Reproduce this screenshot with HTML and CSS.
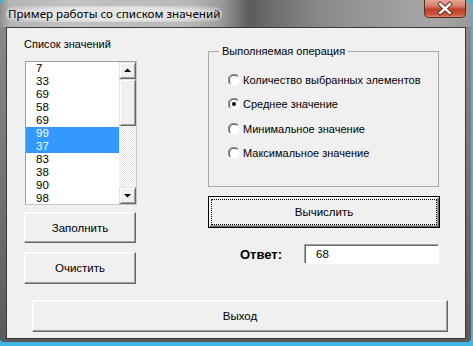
FILE: index.html
```html
<!DOCTYPE html>
<html lang="ru">
<head>
<meta charset="utf-8">
<title>Пример работы со списком значений</title>
<link rel="stylesheet" href="styles.css">
</head>
<body>
<div class="window">
  <div class="titlebar">
    <span class="title">Пример работы со списком значений</span>
    <div class="close">
      <svg width="42" height="18" viewBox="0 0 42 18">
        <path d="M16 4 L26 13 M26 4 L16 13" stroke="#5a2418" stroke-width="4.4" stroke-linecap="square"/>
        <path d="M16 4 L26 13 M26 4 L16 13" stroke="#ffffff" stroke-width="2.6" stroke-linecap="square"/>
      </svg>
    </div>
  </div>
  <div class="client">
    <div class="top">
      <div class="left">
        <div class="label">Список значений</div>
        <div class="listbox">
          <ul class="items">
            <li>7</li>
            <li>33</li>
            <li>69</li>
            <li>58</li>
            <li>69</li>
            <li class="sel">99</li>
            <li class="sel">37</li>
            <li>83</li>
            <li>38</li>
            <li>90</li>
            <li>98</li>
          </ul>
          <div class="scrollbar">
            <div class="sb-btn">
              <svg width="15" height="15" viewBox="0 0 15 15"><polygon points="4,9 11,9 7.5,5.5" fill="#000"/></svg>
            </div>
            <div class="sb-thumb"></div>
            <div class="sb-track"></div>
            <div class="sb-btn">
              <svg width="15" height="15" viewBox="0 0 15 15"><polygon points="4,6 11,6 7.5,9.5" fill="#000"/></svg>
            </div>
          </div>
        </div>
        <button class="btn btn-fill">Заполнить</button>
        <button class="btn btn-clear">Очистить</button>
      </div>
      <div class="right">
        <fieldset class="group">
          <legend>Выполняемая операция</legend>
          <div class="radio">
            <svg class="radio-icon" width="12" height="12" viewBox="0 0 12 12">
              <circle cx="6" cy="6" r="5.5" fill="#ffffff"/>
              <path d="M1.8 10.2 A5.5 5.5 0 0 1 10.2 1.8" fill="none" stroke="#8a8a8a" stroke-width="1"/>
              <path d="M2.6 9.4 A4.6 4.6 0 0 1 9.4 2.6" fill="none" stroke="#404040" stroke-width="1"/>
            </svg>
            <span>Количество выбранных элементов</span>
          </div>
          <div class="radio">
            <svg class="radio-icon" width="12" height="12" viewBox="0 0 12 12">
              <circle cx="6" cy="6" r="5.5" fill="#ffffff"/>
              <path d="M1.8 10.2 A5.5 5.5 0 0 1 10.2 1.8" fill="none" stroke="#8a8a8a" stroke-width="1"/>
              <path d="M2.6 9.4 A4.6 4.6 0 0 1 9.4 2.6" fill="none" stroke="#404040" stroke-width="1"/>
              <circle cx="6" cy="6" r="2" fill="#000"/>
            </svg>
            <span>Среднее значение</span>
          </div>
          <div class="radio">
            <svg class="radio-icon" width="12" height="12" viewBox="0 0 12 12">
              <circle cx="6" cy="6" r="5.5" fill="#ffffff"/>
              <path d="M1.8 10.2 A5.5 5.5 0 0 1 10.2 1.8" fill="none" stroke="#8a8a8a" stroke-width="1"/>
              <path d="M2.6 9.4 A4.6 4.6 0 0 1 9.4 2.6" fill="none" stroke="#404040" stroke-width="1"/>
            </svg>
            <span>Минимальное значение</span>
          </div>
          <div class="radio">
            <svg class="radio-icon" width="12" height="12" viewBox="0 0 12 12">
              <circle cx="6" cy="6" r="5.5" fill="#ffffff"/>
              <path d="M1.8 10.2 A5.5 5.5 0 0 1 10.2 1.8" fill="none" stroke="#8a8a8a" stroke-width="1"/>
              <path d="M2.6 9.4 A4.6 4.6 0 0 1 9.4 2.6" fill="none" stroke="#404040" stroke-width="1"/>
            </svg>
            <span>Максимальное значение</span>
          </div>
        </fieldset>
        <button class="btn btn-default"><span class="focus">Вычислить</span></button>
        <div class="answer">
          <span class="answer-label">Ответ:</span>
          <div class="textbox">68</div>
        </div>
      </div>
    </div>
    <button class="btn btn-exit">Выход</button>
  </div>
</div>
</body>
</html>
```

FILE: styles.css
```css
* { box-sizing: border-box; }

html, body {
  margin: 0;
  padding: 0;
}

body {
  width: 473px;
  height: 346px;
  overflow: hidden;
  background: #3fb6e4;
  font-family: "Liberation Sans", Arial, sans-serif;
  font-size: 11px;
  color: #000;
}

.window {
  width: 471px;
  height: 342px;
  border-radius: 6px 6px 4px 4px;
  background: linear-gradient(180deg, #8c8c8c 0%, #7a7a7a 40%, #5a5a5a 100%);
  display: flex;
  flex-direction: column;
}

.titlebar {
  height: 27px;
  display: flex;
  justify-content: space-between;
  align-items: flex-start;
  border-radius: 6px 6px 0 0;
  background: linear-gradient(90deg, #8e8e8e 0%, #b4b4b4 2%, #c2c2c2 15%, #b9b9b9 40%, #9a9a9a 47%, #5c5c5c 53%, #6e6e6e 58%, #8a8a8a 68%, #9c9c9c 82%, #a6a6a6 92%, #9a9a9a 100%);
}

.title {
  margin: 6px 0 0 6px;
  padding: 0 2px;
  font-family: "Noto Sans", "Open Sans", sans-serif;
  font-size: 11.6px;
  line-height: 16px;
  color: #000;
  border-radius: 8px;
  background: radial-gradient(ellipse at center, rgba(235,235,235,0.85) 55%, rgba(220,220,220,0) 100%);
}

.close {
  width: 42px;
  height: 18px;
  margin-right: 5px;
  border: 1px solid #5a2a22;
  border-top: none;
  border-radius: 0 0 5px 5px;
  background: linear-gradient(180deg, #e6a696 0%, #d7806c 35%, #c0402a 55%, #c9553c 85%, #dc8a70 100%);
  display: flex;
  justify-content: center;
  align-items: center;
  overflow: hidden;
}

.close svg { display: block; }

.client {
  flex: 1;
  margin: 0 5px 3px 6px;
  border: 1px solid #3a3a3a;
  background: #f0f0f0;
  display: flex;
  flex-direction: column;
  padding-top: 9px;
}

.top {
  display: flex;
  align-items: flex-start;
}

.left {
  margin-left: 17px;
  width: 113px;
  display: flex;
  flex-direction: column;
}

.label {
  height: 14px;
  line-height: 14px;
}

.listbox {
  margin: 10px 0 0 1px;
  width: 112px;
  height: 144px;
  border: 1px solid;
  border-color: #a0a0a0 #c8c8c8 #c8c8c8 #a0a0a0;
  background: #fff;
  display: flex;
}

.items {
  list-style: none;
  margin: 0;
  padding: 0;
  flex: 1;
  overflow: hidden;
}

.items li {
  height: 13px;
  line-height: 13px;
  padding-left: 10px;
  font-size: 11.5px;
}

.items li.sel {
  background: #3399ff;
  color: #fff;
}

.scrollbar {
  width: 17px;
  display: flex;
  flex-direction: column;
}

.sb-btn, .sb-thumb {
  border: 1px solid;
  border-color: #e3e3e3 #696969 #696969 #e3e3e3;
  box-shadow: inset 1px 1px #fff, inset -1px -1px #a0a0a0;
  background: #f0f0f0;
}

.sb-btn {
  height: 17px;
  display: flex;
  justify-content: center;
  align-items: center;
}

.sb-btn svg { display: block; }

.sb-thumb {
  height: 47px;
}

.sb-track {
  flex: 1;
  background-color: #fff;
  background-image: repeating-conic-gradient(#e6e6e6 0 25%, #ffffff 0 50%);
  background-size: 2px 2px;
}

.btn {
  font-family: "Liberation Sans", Arial, sans-serif;
  font-size: 11.5px;
  color: #000;
  background: #f0f0f0;
  border: 1px solid;
  border-color: #ffffff #696969 #696969 #ffffff;
  box-shadow: inset -1px -1px #a0a0a0, inset 1px 1px #f7f7f7;
  padding: 0;
  margin: 0;
  display: flex;
  justify-content: center;
  align-items: center;
}

.btn-fill {
  margin-top: 7px;
  width: 112px;
  height: 31px;
}

.btn-clear {
  margin-top: 9px;
  width: 112px;
  height: 32px;
}

.right {
  margin-left: 71px;
  margin-top: 7px;
  width: 232px;
  display: flex;
  flex-direction: column;
}

.group {
  margin: 0;
  width: 231px;
  height: 143px;
  border: 1px solid #a8a8a8;
  padding: 10px 0 0 19px;
  display: flex;
  flex-direction: column;
}

.group legend {
  margin-left: -9px;
  padding: 0 3px;
  line-height: 14px;
  font-size: 11px;
}

.radio {
  height: 24.3px;
  display: flex;
  align-items: center;
  gap: 3px;
  font-size: 11px;
}

.radio-icon { display: block; flex: none; }

.btn-default {
  margin-top: 9px;
  width: 232px;
  height: 32px;
  border: 1px solid #000;
  box-shadow: inset 1px 1px #fff, inset -1px -1px #696969, inset -2px -2px #a0a0a0;
  padding: 2px;
}

.focus {
  flex: 1;
  align-self: stretch;
  border: 1px dotted #000;
  display: flex;
  justify-content: center;
  align-items: center;
}

.answer {
  margin-top: 16px;
  display: flex;
  align-items: center;
}

.answer-label {
  margin-left: 32px;
  width: 64px;
  font-weight: bold;
  font-size: 13px;
}

.textbox {
  width: 135px;
  height: 20px;
  border: 1px solid;
  border-color: #a0a0a0 #ffffff #ffffff #a0a0a0;
  box-shadow: inset 1px 1px #696969;
  background: #fff;
  padding-left: 11px;
  line-height: 19px;
  font-size: 11.5px;
}

.btn-exit {
  margin: 16px 0 0 25px;
  width: 416px;
  height: 32px;
}
```
